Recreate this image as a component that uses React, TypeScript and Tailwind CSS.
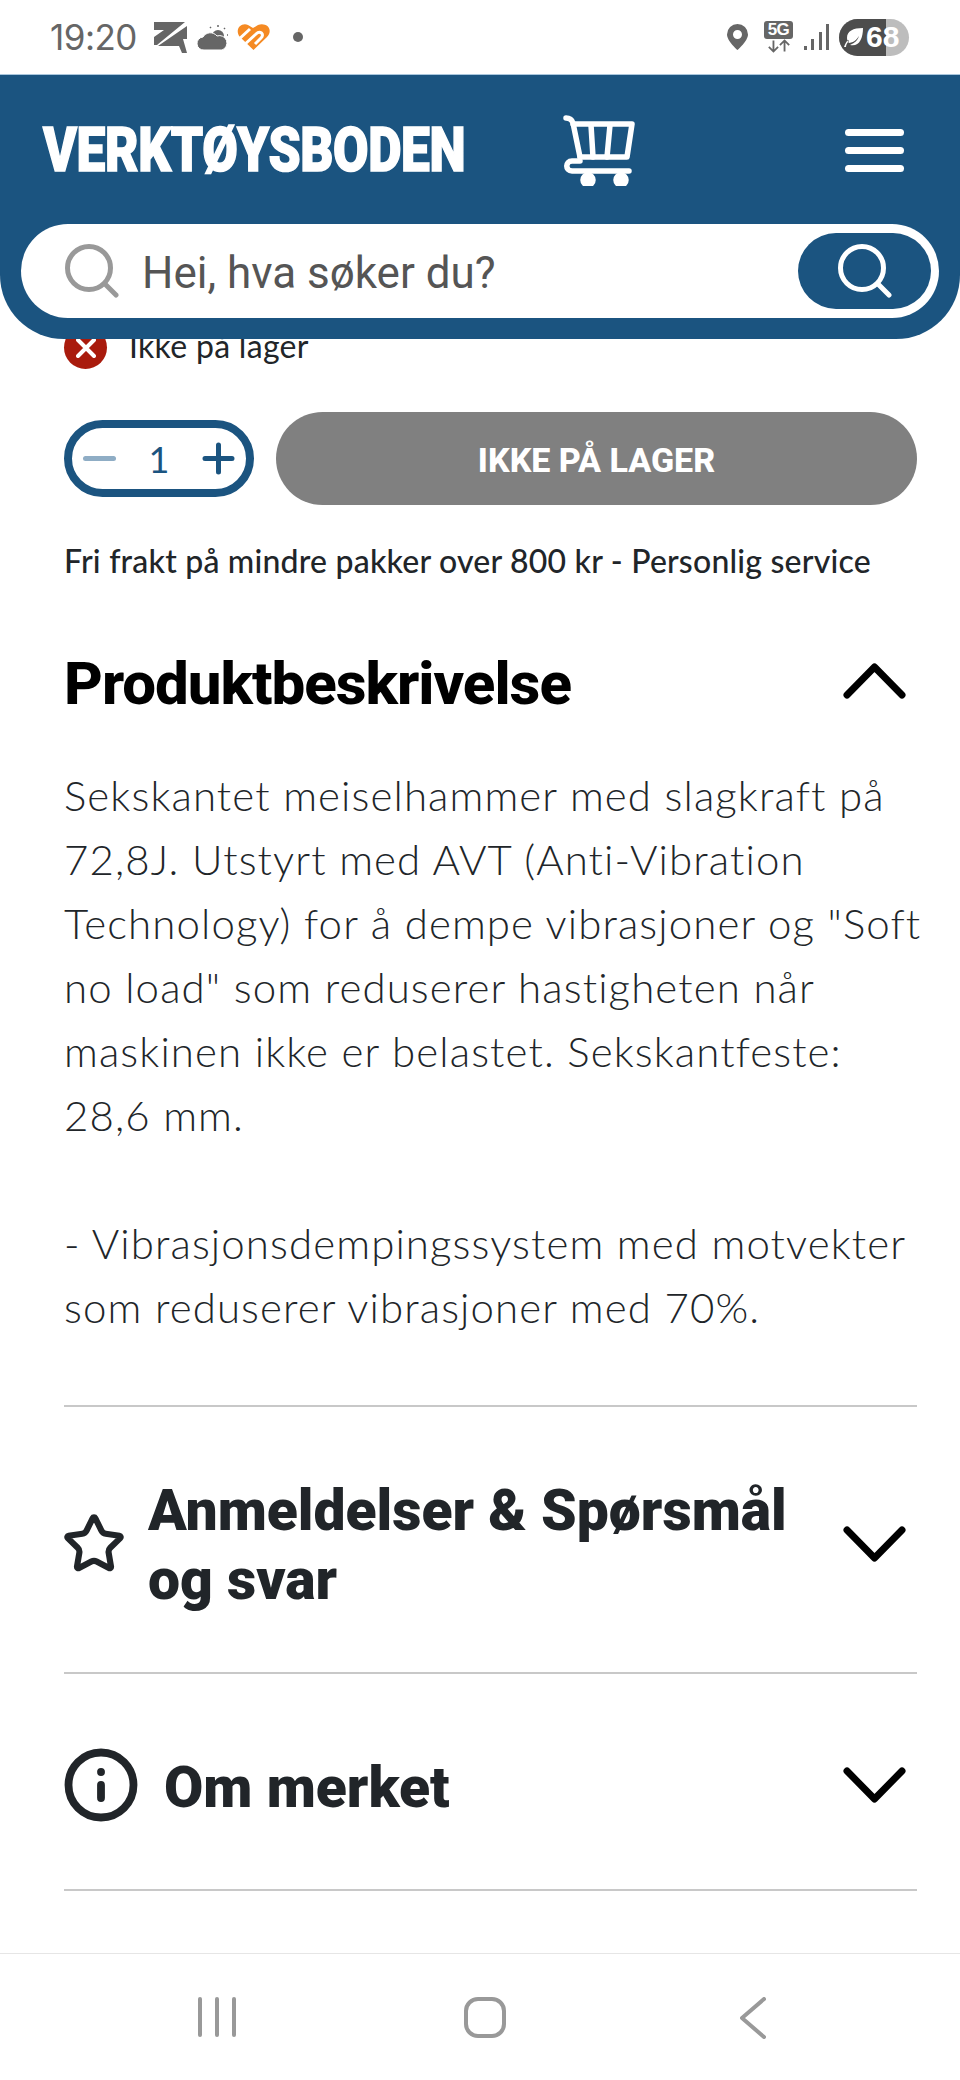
import { Star, Info } from "lucide-react";

const headingFont = "font-['Roboto',sans-serif]";

function SearchGlyph({ className }: { className: string }) {
  return (
    <svg viewBox="0 0 54 54" className={className} fill="none" stroke="currentColor" strokeLinecap="round">
      <circle cx="24" cy="24" r="21.5" strokeWidth="5" />
      <path d="M40 40l11 11" strokeWidth="5" />
    </svg>
  );
}

function Chevron({ up }: { up?: boolean }) {
  return (
    <svg viewBox="0 0 63 36" className="h-[36px] w-[63px] shrink-0" fill="none" stroke="#000" strokeWidth="7" strokeLinecap="round" strokeLinejoin="round">
      <path d={up ? "M4 32L31.500 4 59 32" : "M4 4l27.500 28L59 4"} />
    </svg>
  );
}

function StatusBar() {
  return (
    <div className="flex h-[74px] items-center bg-white pl-[50px] pr-[51px] text-[#666]">
      <span className="w-[104px] font-['Inter',sans-serif] text-[35px] leading-none tracking-[-0.5px]">19:20</span>
      <svg viewBox="0 0 33 31" className="h-[31px] w-[33px]" fill="currentColor">
        <path d="M0 0h31L3 23H0v-8l10-7H0z" />
        <path d="M33 4v13h-4l4 14h-5l-3-7H4z" />
      </svg>
      <svg viewBox="0 0 31 25" className="ml-[10px] h-[25px] w-[31px]" fill="currentColor">
        <circle cx="21" cy="11" r="6" />
        <path d="M21 0v2M30 10h1M28 3l-1 1M13 2l1 1" stroke="currentColor" strokeWidth="1.5" />
        <path d="M7 25a6.500 6.500 0 0 1-1-13 8.500 8.500 0 0 1 14-1 7 7 0 0 1 5 14z" stroke="#fff" strokeWidth="1" />
      </svg>
      <svg viewBox="0 0 33 26" className="ml-[9px] h-[26px] w-[33px]">
        <path fill="#f58a23" d="M16.500 26L3 13C-3 6 4-2 11 1l5 3 5-3c8-3 16 4 9 12z" />
        <path fill="none" stroke="#fff" strokeWidth="3" d="M0 17L13 5M7 21L19 10c4-4 9 0 5 4l-6 6" />
      </svg>
      <span className="ml-[23px] size-[10px] rounded-full bg-[#666]" />
      <div className="ml-auto flex items-center">
        <svg viewBox="0 0 21 26" className="h-[26px] w-[21px]" fill="currentColor">
          <path fillRule="evenodd" d="M10.500 0A10.500 10.500 0 0 0 0 10.500C0 17 10.500 26 10.500 26S21 17 21 10.500A10.500 10.500 0 0 0 10.500 0zm0 6a4.500 4.500 0 1 1 0 9 4.500 4.500 0 0 1 0-9z" />
        </svg>
        <div className="ml-[16px] flex w-[29px] flex-col items-center">
          <span className="w-full rounded-[3px] bg-[#666] text-center font-['Liberation_Sans',sans-serif] text-[17px] font-bold leading-[18px] tracking-[-0.5px] text-white">5G</span>
          <svg viewBox="0 0 26 14" className="h-[14px] w-[24px]" fill="none" stroke="currentColor" strokeWidth="2">
            <path d="M7 1v11M2 8l5 5 5-5M19 13V2M14 6l5-5 5 5" />
          </svg>
        </div>
        <div className="ml-[11px] flex h-[26px] w-[25px] items-end justify-between">
          <span className="h-[4px] w-[3px] bg-[#666]" />
          <span className="h-[11px] w-[3px] bg-[#666]" />
          <span className="h-[18px] w-[3px] bg-[#666]" />
          <span className="h-[26px] w-[3px] bg-[#666]" />
        </div>
        <div className="relative ml-[10px] flex h-[37px] w-[70px] items-center overflow-hidden rounded-full bg-[#bdbdbd]">
          <span className="absolute inset-y-0 left-0 w-[47px] bg-[#4d4d4d]" />
          <svg viewBox="0 0 22 22" className="relative ml-[4px] h-[22px] w-[22px]" fill="#fff">
            <path d="M20 2C10 2 4 5 4 12c0 2 1 4 2 5 6-1 8-4 10-7-1 4-4 7-9 9 9 2 13-6 13-17zM1 21c1-3 2-5 4-7l1 1c-2 2-3 4-3 6z" />
          </svg>
          <span className="relative ml-[1px] font-['Liberation_Sans',sans-serif] text-[30px] font-bold leading-none text-white">68</span>
        </div>
      </div>
    </div>
  );
}

function Header() {
  return (
    <header className="relative z-10 h-[265px] rounded-b-[64px] border-t border-[#a9c6dd] bg-[#1b5480] pb-[21px]">
      <div className="flex h-[149px] items-start pl-[43px] pr-[56px] pt-[40px]">
        <div className="w-[520px] shrink-0">
          <span className={`${headingFont} block origin-left scale-x-[0.83] text-[62px] font-black uppercase leading-[70px] tracking-[-0.5px] text-white [-webkit-text-stroke:1.5px_white]`}>
            Verktøysboden
          </span>
        </div>
        <svg viewBox="0 0 72 71" className="h-[71px] w-[72px] shrink-0" fill="none" stroke="#fff" strokeWidth="5.500" strokeLinecap="round" strokeLinejoin="round">
          <path d="M3 3c4 0 6 2 7 5l7 34" />
          <path d="M10 9h59l-5 33H17" />
          <path d="M28 10l2 32M47 10l-3 32" />
          <path d="M17 46H9c-7 0-7 10 0 10h57" />
          <circle cx="25" cy="65" r="5" fill="#fff" />
          <circle cx="58" cy="65" r="5" fill="#fff" />
        </svg>
        <div className="ml-auto mt-[14px] flex w-[59px] flex-col gap-[11px]">
          <span className="h-[7px] rounded-full bg-white" />
          <span className="h-[7px] rounded-full bg-white" />
          <span className="h-[7px] rounded-full bg-white" />
        </div>
      </div>
      <div className="ml-[21px] mr-[21px] flex h-[94px] items-center rounded-full bg-white pl-[44px] pr-[8px]">
        <SearchGlyph className="size-[54px] shrink-0 text-[#999]" />
        <span className={`${headingFont} ml-[23px] translate-y-[2px] text-[44px] leading-none text-[#555]`}>Hei, hva søker du?</span>
        <button className="ml-auto flex h-[76px] w-[133px] items-center justify-center rounded-full bg-[#1b5480] text-white">
          <SearchGlyph className="size-[54px]" />
        </button>
      </div>
    </header>
  );
}

function StockAndBuy() {
  return (
    <section className="pl-[64px] pr-[43px]">
      <div className="-mt-[13px] flex h-[43px] items-center">
        <span className="flex size-[43px] items-center justify-center rounded-full bg-[#a91b0d]">
          <svg viewBox="0 0 20 20" className="size-[20px]" stroke="#fff" strokeWidth="4" strokeLinecap="round">
            <path d="M2 2l16 16M18 2L2 18" />
          </svg>
        </span>
        <span className="ml-[22px] -translate-y-[2px] font-['Lato',sans-serif] text-[32px] leading-none tracking-[0.3px] text-[#212529]">Ikke på lager</span>
      </div>
      <div className="mt-[43px] flex items-center gap-[22px]">
        <div className="flex h-[77px] w-[190px] shrink-0 items-center justify-between rounded-full border-[8px] border-[#1b5480] px-[11px] text-[#1b5480]">
          <span className="h-[5px] w-[33px] rounded-full bg-[#8fadc5]" />
          <span className="font-['Lato',sans-serif] text-[36px] leading-none">1</span>
          <svg viewBox="0 0 33 33" className="size-[33px]" stroke="currentColor" strokeWidth="5" strokeLinecap="round">
            <path d="M3 16.500h27M16.500 3v27" />
          </svg>
        </div>
        <button className={`${headingFont} flex h-[93px] flex-1 items-center justify-center rounded-full bg-[#808080] pt-[3px] text-[34px] font-extrabold text-white`}>IKKE PÅ LAGER</button>
      </div>
      <p className="mt-[36px] font-['Lato',sans-serif] text-[32px] font-medium leading-[40px] tracking-[0.2px] text-[#212529]">
        Fri frakt på mindre pakker over 800 kr - Personlig service
      </p>
    </section>
  );
}

function Description() {
  return (
    <section className="pl-[64px] pr-[43px]">
      <div className="mt-[65px] flex h-[70px] items-center justify-between pr-[11px]">
        <h2 className={`${headingFont} translate-y-[3px] text-[60px] font-extrabold leading-none tracking-[-1px] text-black`}>Produktbeskrivelse</h2>
        <Chevron up />
      </div>
      <div className="-mr-[12px] mt-[47px] font-['Lato',sans-serif] text-[42px] font-light leading-[64px] tracking-[1.1px] text-[#212529]">
        <p>Sekskantet meiselhammer med slagkraft på 72,8J. Utstyrt med AVT (Anti-Vibration Technology) for å dempe vibrasjoner og "Soft no load" som reduserer hastigheten når maskinen ikke er belastet. Sekskantfeste: 28,6 mm.</p>
        <p className="mt-[64px]">- Vibrasjonsdempingssystem med motvekter som reduserer vibrasjoner med 70%.</p>
      </div>
    </section>
  );
}

function Accordion() {
  return (
    <section className="mt-[66px] pl-[64px] pr-[43px]">
      <div className="flex h-[269px] items-center border-y-2 border-[#c8c8c8] pr-[11px] pt-[8px]">
        <Star className="-ml-[2px] size-[64px] shrink-0 text-[#212529]" strokeWidth={2.3} />
        <h3 className={`${headingFont} ml-[22px] w-[660px] translate-y-[1px] text-[57px] font-black leading-[69px] text-[#212529]`}>Anmeldelser &amp; Spørsmål og svar</h3>
        <span className="ml-auto"><Chevron /></span>
      </div>
      <div className="flex h-[217px] items-center border-b-2 border-[#c8c8c8] pr-[11px] pt-[6px]">
        <Info className="size-[78px] -ml-[2px] shrink-0 text-[#212529]" strokeWidth={2.4} />
        <h3 className={`${headingFont} ml-[24px] translate-y-[3px] text-[57px] font-black leading-none text-[#212529]`}>Om merket</h3>
        <span className="ml-auto"><Chevron /></span>
      </div>
    </section>
  );
}

function NavBar() {
  return (
    <nav className="mt-auto flex h-[127px] items-start border-t border-[#e6e6e6] bg-white pl-[198px] pt-[43px] text-[#999]">
      <div className="flex h-[40px] w-[38px] justify-between">
        <span className="w-[4px] rounded-full bg-[#999]" />
        <span className="w-[4px] rounded-full bg-[#999]" />
        <span className="w-[4px] rounded-full bg-[#999]" />
      </div>
      <span className="ml-[228px] h-[41px] w-[42px] rounded-[14px] border-[4px] border-[#999]" />
      <svg viewBox="0 0 26 42" className="ml-[234px] h-[42px] w-[26px]" fill="none" stroke="currentColor" strokeWidth="4" strokeLinecap="round" strokeLinejoin="round">
        <path d="M24 2L2 21l22 19" />
      </svg>
    </nav>
  );
}

export default function App() {
  return (
    <div className="flex h-[2080px] w-[960px] flex-col overflow-hidden bg-white">
      <StatusBar />
      <Header />
      <StockAndBuy />
      <Description />
      <Accordion />
      <NavBar />
    </div>
  );
}
